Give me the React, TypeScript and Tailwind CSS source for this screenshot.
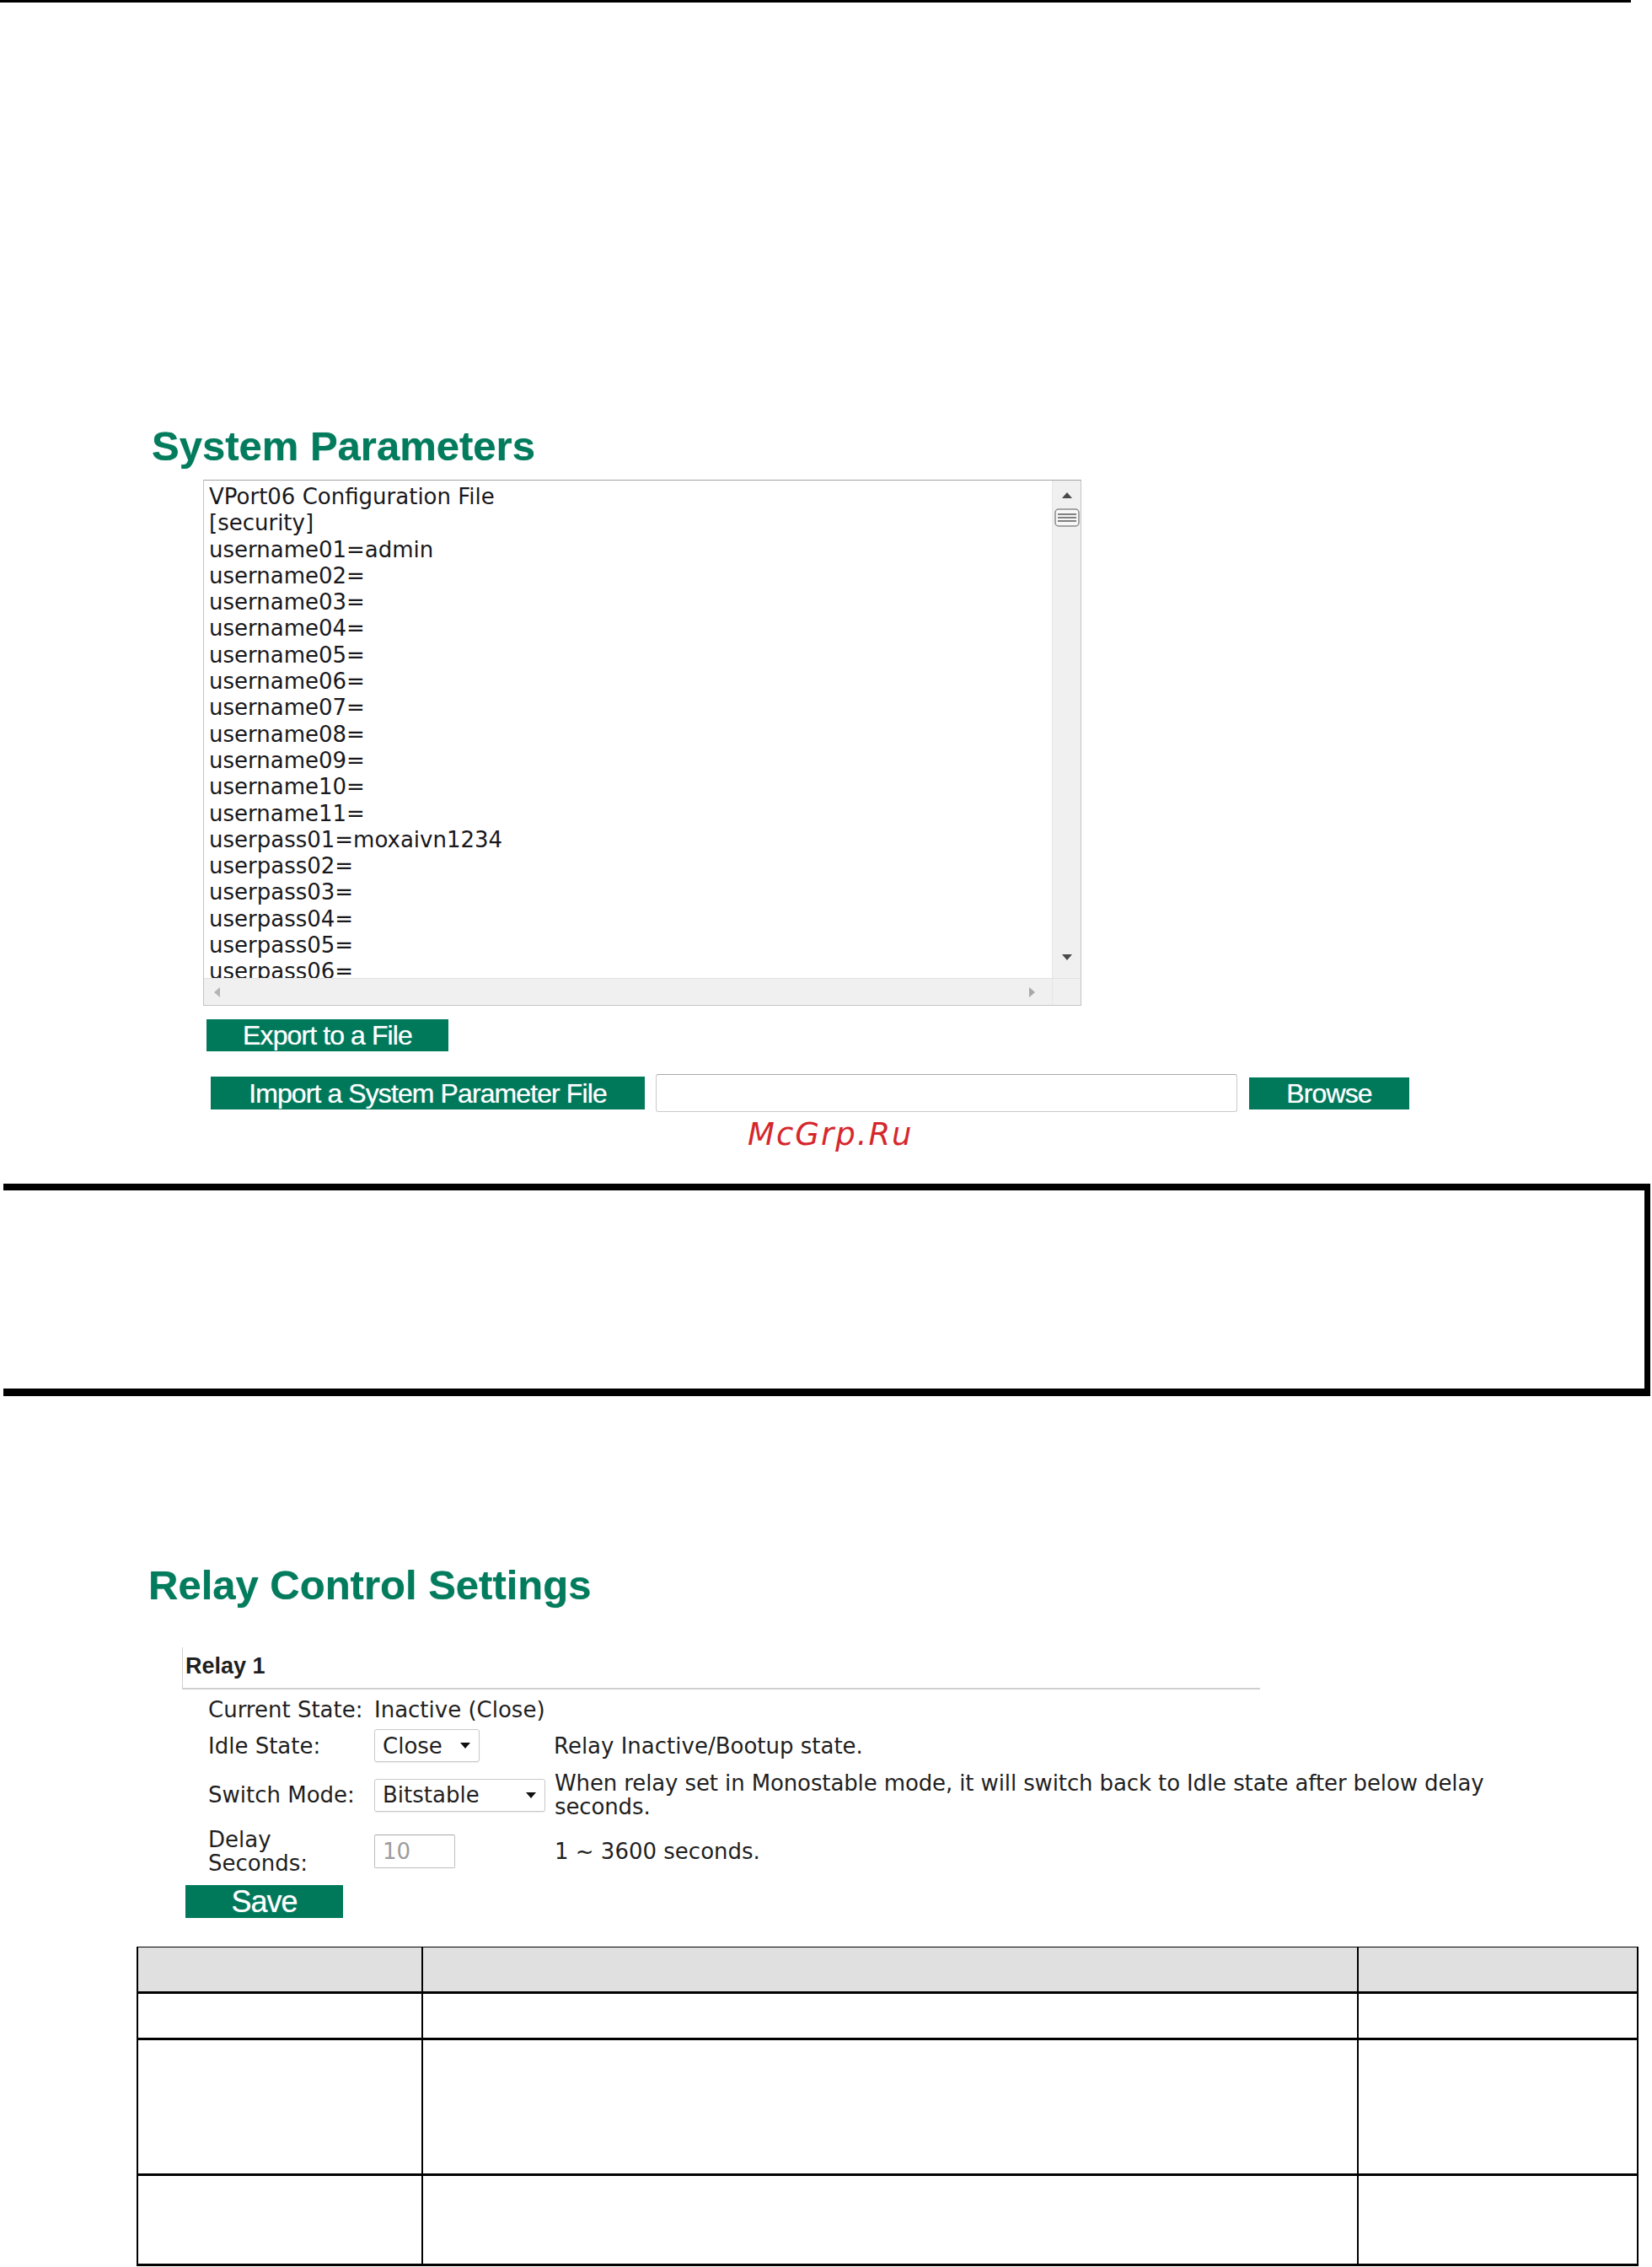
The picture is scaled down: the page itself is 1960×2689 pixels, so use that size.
import React from 'react';

const configLines = [
  'VPort06 Configuration File',
  '[security]',
  'username01=admin',
  'username02=',
  'username03=',
  'username04=',
  'username05=',
  'username06=',
  'username07=',
  'username08=',
  'username09=',
  'username10=',
  'username11=',
  'userpass01=moxaivn1234',
  'userpass02=',
  'userpass03=',
  'userpass04=',
  'userpass05=',
  'userpass06=',
];

function Arrow({ dir, color = '#4a4a4a' }: { dir: 'up' | 'down' | 'left' | 'right'; color?: string }) {
  const pts = {
    up: '0,7 6,0 12,7',
    down: '0,0 12,0 6,7',
    left: '7,0 7,12 0,6',
    right: '0,0 0,12 7,6',
  }[dir];
  const vertical = dir === 'up' || dir === 'down';
  return (
    <svg width={vertical ? 12 : 7} height={vertical ? 7 : 12} viewBox={vertical ? '0 0 12 7' : '0 0 7 12'}>
      <polygon points={pts} fill={color} />
    </svg>
  );
}

function ConfigBox() {
  return (
    <div className="ml-[241px] mt-[15px] flex h-[624px] w-[1042px] border border-[#c4c4c4] border-t-[#a2a2a2] bg-white">
      <div className="flex w-[1006px] flex-col">
        <div className="h-[590px] overflow-hidden pl-[6px] pt-[4px] font-['DejaVu_Sans',sans-serif] text-[26px] leading-[31.3px] text-[#18181c]">
          {configLines.map((line) => (
            <div key={line} className="whitespace-pre">
              {line}
            </div>
          ))}
        </div>
        <div className="flex h-[32px] items-center justify-between border-t border-[#e2e2e2] bg-[#f0f0f0] pl-[12px] pr-[20px]">
          <Arrow dir="left" color="#b4b4b4" />
          <Arrow dir="right" color="#a8a8a8" />
        </div>
      </div>
      <div className="flex w-[34px] flex-col border-l border-[#e6e6e6] bg-[#f0f0f0]">
        <div className="flex flex-1 flex-col items-center">
          <div className="mt-[14px]">
            <Arrow dir="up" />
          </div>
          <svg className="mt-[12px]" width="30" height="22" viewBox="0 0 30 22">
            <rect x="1" y="1" width="28" height="20" rx="4" fill="#f7f7f7" stroke="#8c8c8c" strokeWidth="1.5" />
            <line x1="4" y1="7" x2="26" y2="7" stroke="#5a5a5a" strokeWidth="1.5" />
            <line x1="4" y1="11" x2="26" y2="11" stroke="#5a5a5a" strokeWidth="1.5" />
            <line x1="4" y1="15" x2="26" y2="15" stroke="#5a5a5a" strokeWidth="1.5" />
          </svg>
          <div className="flex-1" />
          <div className="mb-[21px]">
            <Arrow dir="down" />
          </div>
        </div>
        <div className="h-[32px] border-t border-[#e2e2e2] bg-[#f0f0f0]" />
      </div>
    </div>
  );
}

function Select({ value, width }: { value: string; width: 'short' | 'long' }) {
  return (
    <div
      className={
        width === 'short'
          ? 'flex h-[39px] w-[125px] items-center justify-between rounded-[3px] border border-[#c9c9c9] pl-[9px] pr-[10px] shadow-[0_1px_1px_rgba(0,0,0,0.08)]'
          : 'flex h-[39px] w-[203px] items-center justify-between rounded-[3px] border border-[#c9c9c9] pl-[9px] pr-[10px] shadow-[0_1px_1px_rgba(0,0,0,0.08)]'
      }
    >
      <span>{value}</span>
      <Arrow dir="down" color="#111" />
    </div>
  );
}

function GreenButton({ children, className }: { children: React.ReactNode; className: string }) {
  return (
    <div
      className={`flex items-center justify-center bg-[#00795b] font-['Liberation_Sans',Arial,sans-serif] text-white [text-shadow:0_0_1px_rgba(255,255,255,0.6)] ${className}`}
    >
      {children}
    </div>
  );
}

export default function App() {
  return (
    <div className="relative h-[2689px] w-[1960px] overflow-hidden bg-white">
      <div className="h-[3px] w-[1935px] bg-black" />

      <h1 className="ml-[180px] mt-[502px] font-['Liberation_Sans',Arial,sans-serif] text-[49px] font-bold leading-none text-[#037b5d] [text-shadow:0_0_1px_rgba(3,123,93,0.7)]">
        System Parameters
      </h1>

      <ConfigBox />

      <GreenButton className="ml-[245px] mt-[16px] h-[38px] w-[287px] text-[32px] tracking-[-0.9px]">
        Export to a File
      </GreenButton>

      <div className="mt-[27px] flex h-[45px] items-center">
        <GreenButton className="ml-[250px] h-[39px] w-[515px] text-[32px] tracking-[-0.9px]">
          Import a System Parameter File
        </GreenButton>
        <div className="ml-[13px] h-[45px] w-[690px] rounded-[3px] border border-[#cacaca] border-t-[#a9a9a9] bg-white" />
        <GreenButton className="ml-[14px] h-[38px] w-[190px] text-[32px] tracking-[-0.9px]">Browse</GreenButton>
      </div>

      <div className="ml-[887px] mt-[8px] font-['DejaVu_Sans',sans-serif] text-[37px] italic leading-none tracking-[2px] text-[#d5272b]">
        McGrp.Ru
      </div>

      <div className="ml-[4px] mt-[40px] h-[252px] w-[1954px] border-b-[9px] border-r-[7px] border-t-[8px] border-black" />

      <h1 className="ml-[176px] mt-[200px] font-['Liberation_Sans',Arial,sans-serif] text-[49px] font-bold leading-none text-[#037b5d] [text-shadow:0_0_1px_rgba(3,123,93,0.7)]">
        Relay Control Settings
      </h1>

      <div className="ml-[216px] mt-[49px] h-[50px] w-[1279px] border-b-2 border-l border-[#cfcfcf] pl-[3px] pt-[9px] font-['Liberation_Sans',Arial,sans-serif] text-[27px] font-bold leading-none text-[#1f1f1f]">
        Relay 1
      </div>

      <div className="ml-[247px] mt-[10px] flex flex-col font-['DejaVu_Sans',sans-serif] text-[26px] leading-[28px] text-[#1f1f22]">
        <div className="flex h-[28px] items-center">
          <div className="w-[197px] shrink-0">Current State:</div>
          <div>Inactive (Close)</div>
        </div>
        <div className="mt-[9px] flex h-[39px] items-center">
          <div className="w-[197px] shrink-0">Idle State:</div>
          <div className="w-[213px] shrink-0">
            <Select value="Close" width="short" />
          </div>
          <div>Relay Inactive/Bootup state.</div>
        </div>
        <div className="mt-[11px] flex h-[56px] items-center">
          <div className="w-[197px] shrink-0">Switch Mode:</div>
          <div className="w-[213px] shrink-0">
            <Select value="Bitstable" width="long" />
          </div>
          <div className="w-[1180px] pl-[1px] tracking-[-0.12px]">
            When relay set in Monostable mode, it will switch back to Idle state after below delay seconds.
          </div>
        </div>
        <div className="mt-[11px] flex h-[56px] items-center">
          <div className="w-[197px] shrink-0">Delay Seconds:</div>
          <div className="w-[213px] shrink-0">
            <div className="flex h-[40px] w-[96px] items-center rounded-[2px] border border-[#bdbdbd] border-t-[#a8a8a8] pl-[9px] text-[#9c9c9c]">
              10
            </div>
          </div>
          <div className="pl-[1px]">1 ~ 3600 seconds.</div>
        </div>
      </div>

      <GreenButton className="ml-[220px] mt-[12px] h-[39px] w-[187px] text-[36px] tracking-[-1px]">Save</GreenButton>

      <div className="ml-[162px] mt-[34px] w-[1782px] border-x-2 border-t border-black">
        <div className="flex h-[55px] border-b-[3px] border-black bg-[#e0e0e0]">
          <div className="w-[338px] border-r-2 border-black" />
          <div className="w-[1110px] border-r-2 border-black" />
          <div className="flex-1" />
        </div>
        <div className="flex h-[55px] border-b-[3px] border-black">
          <div className="w-[338px] border-r-2 border-black" />
          <div className="w-[1110px] border-r-2 border-black" />
          <div className="flex-1" />
        </div>
        <div className="flex h-[161px] border-b-[3px] border-black">
          <div className="w-[338px] border-r-2 border-black" />
          <div className="w-[1110px] border-r-2 border-black" />
          <div className="flex-1" />
        </div>
        <div className="flex h-[107px] border-b-[3px] border-black">
          <div className="w-[338px] border-r-2 border-black" />
          <div className="w-[1110px] border-r-2 border-black" />
          <div className="flex-1" />
        </div>
      </div>
    </div>
  );
}
